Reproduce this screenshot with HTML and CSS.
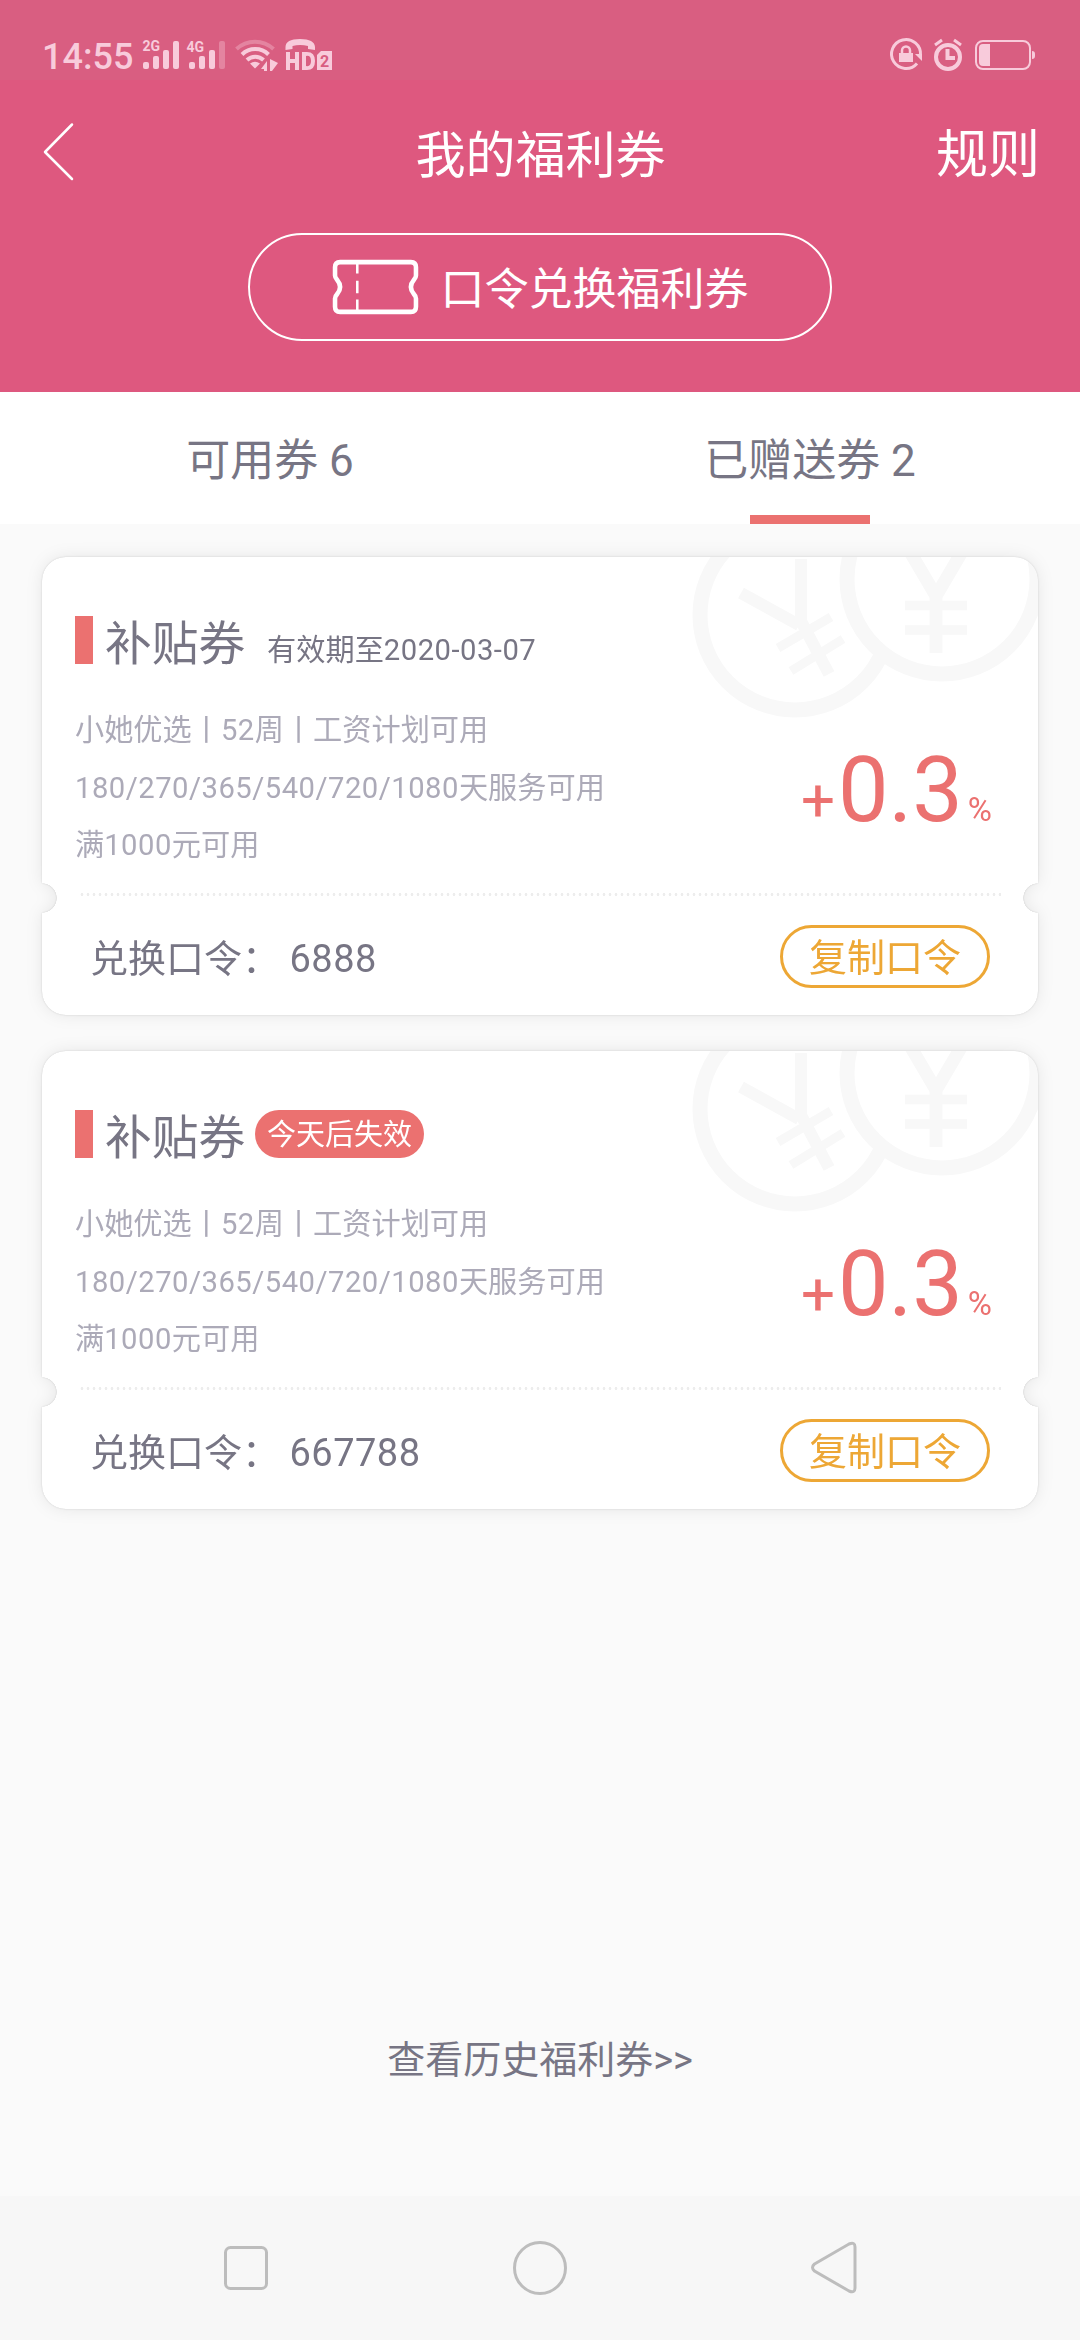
FILE: index.html
```html
<!DOCTYPE html>
<html lang="zh-CN">
<head>
<meta charset="utf-8">
<title>我的福利券</title>
<link rel="stylesheet" href="styles.css">
</head>
<body>
<div class="screen">
  <header class="header">
    <div class="status">
      <span class="time">14:55</span>
      <svg class="status-left" width="200" height="40" viewBox="140 36 200 40" fill="#f8cbdb">
        <text class="net" x="142.5" y="51">2G</text>
        <rect x="143" y="62" width="6" height="7" rx="2"/><rect x="153" y="56" width="6" height="13" rx="2"/><rect x="163" y="50" width="6" height="19" rx="2"/><rect x="173" y="41" width="6" height="28" rx="2"/>
        <text class="net" x="186.5" y="52">4G</text>
        <rect x="189" y="62" width="6" height="7" rx="2"/><rect x="199" y="56" width="6" height="13" rx="2"/><rect x="209" y="50" width="6" height="19" rx="2"/><rect x="219" y="41" width="6" height="28" rx="2" opacity=".35"/>
        <g fill="none" stroke="#f8cbdb" stroke-width="4">
          <path d="M236.500 49a27 27 0 0 1 37 0" opacity=".35"/>
          <path d="M242 54.500a19 19 0 0 1 26.500 0"/>
          <path d="M247 60a12 12 0 0 1 16.500 0"/>
        </g>
        <path d="M250 63.500q5-3.500 10 0l-5 5zM261 69l6-8v10h-3v-2zM270 59l8 4-6 8h-2z"/>
        <path d="M285.500 50v-3q0-8 14.500-8t15 8v3l-7-1v-3q-8-2-15.500 0v3z"/>
        <path d="M286 52h4v7h5v-7h4v18h-4v-7h-5v7h-4z"/>
        <path fill-rule="evenodd" d="M302 52h5q8 0 8 9t-8 9h-5zM306 56v10q5 1 5-5t-5-5z"/>
        <path d="M321 51h11v19h-15V55z"/>
        <text class="sim" x="320" y="66.500">2</text>
      </svg>
      <svg class="status-right" width="150" height="40" viewBox="888 36 150 40" fill="none" stroke="#f8cbdb" stroke-width="3">
        <path d="M917 63.500A14.500 14.500 0 1 1 920.500 55"/>
        <path d="M915 54h7v7z" fill="#f8cbdb" stroke="none"/>
        <rect x="899" y="53" width="14" height="9" fill="#f8cbdb" stroke="none"/>
        <path d="M902 54v-3.500a4 4 0 0 1 8 0V54" stroke-width="2.500"/>
        <circle cx="948" cy="57" r="12" stroke-width="4"/>
        <path d="M935 45l7-5M961 45l-7-5"/>
        <path d="M947.500 49v9h7.500" stroke-width="4"/>
        <rect x="976" y="41" width="54" height="28" rx="7" stroke-width="2"/>
        <path d="M990 44v22h-7q-4 0-4-4V48q0-4 4-4zM1032 51q3 0 3 3v2q0 3-3 3z" fill="#f8cbdb" stroke="none"/>
      </svg>
    </div>
    <nav class="bar">
      <svg class="back" width="36" height="64" viewBox="0 0 36 64"><path d="M31 4.500L4 32l27 27"/></svg>
      <h1 class="title">我的福利券</h1>
      <a class="rules">规则</a>
    </nav>
    <button class="redeem">
      <svg width="87" height="56" viewBox="0 0 86 54" preserveAspectRatio="none" fill="none" stroke="#fff" stroke-width="4.500">
        <path d="M8 3h70q5 0 5 5v8q0 2-2 4-6 7 0 14 2 2 2 4v8q0 5-5 5H8q-5 0-5-5v-8q0-2 2-4 6-7 0-14-2-2-2-4V8q0-5 5-5z"/>
        <path d="M25 4v10m0 7v12m0 6v11" stroke-width="2.500"/>
      </svg>
      <span>口令兑换福利券</span>
    </button>
  </header>

  <div class="tabs">
    <div class="tab">可用券 6</div>
    <div class="tab active">已赠送券 2</div>
  </div>

  <main class="list">
    <article class="card">
      <div class="card-body">
        <svg class="coins" width="360" height="170" viewBox="636 0 360 170"><use href="#coins"/></svg>
        <div class="card-head"><i class="mark"></i><h2>补贴券</h2><span class="date">有效期至<b>2020-03-07</b></span></div>
        <div class="info">
          <div class="rules-text"><p>小她优选丨<b>52</b>周丨工资计划可用</p><p><b>180/270/365/540/720/1080</b>天服务可用</p><p>满<b>1000</b>元可用</p></div>
          <div class="rate"><span class="plus">+</span><span class="num">0.3</span><span class="pct">%</span></div>
        </div>
        <div class="dots"></div>
        <div class="code"><span>兑换口令： <b>6888</b></span><button class="copy">复制口令</button></div>
      </div>
    </article>
    <article class="card">
      <div class="card-body">
        <svg class="coins" width="360" height="170" viewBox="636 0 360 170"><use href="#coins"/></svg>
        <div class="card-head"><i class="mark"></i><h2>补贴券</h2><span class="expire">今天后失效</span></div>
        <div class="info">
          <div class="rules-text"><p>小她优选丨<b>52</b>周丨工资计划可用</p><p><b>180/270/365/540/720/1080</b>天服务可用</p><p>满<b>1000</b>元可用</p></div>
          <div class="rate"><span class="plus">+</span><span class="num">0.3</span><span class="pct">%</span></div>
        </div>
        <div class="dots"></div>
        <div class="code"><span>兑换口令： <b>667788</b></span><button class="copy">复制口令</button></div>
      </div>
    </article>
  </main>

  <a class="history">查看历史福利券&gt;&gt;</a>

  <footer class="sysnav">
    <svg width="56" height="60" viewBox="0 0 56 60"><rect x="7.500" y="9.500" width="41" height="41" rx="5"/></svg>
    <svg width="56" height="60" viewBox="0 0 56 60"><circle cx="28" cy="30" r="25.500"/></svg>
    <svg width="56" height="60" viewBox="0 0 56 60"><path d="M8.500 26L43 6Q49 3.500 49 9v41q0 5.500-6 3L8.500 33Q4.500 29.500 8.500 26z"/></svg>
  </footer>
</div>
<svg class="defs" width="0" height="0">
  <defs>
    <g id="coins" fill="none" stroke="#f8f8f8">
      <circle cx="753" cy="58" r="95" stroke-width="15"/>
      <path d="M699 36l58 32M759 2v62l28 53" stroke-width="12"/>
      <path d="M736 91l53-31M749 114l52-32" stroke-width="9"/>
      <circle cx="900" cy="22" r="95" fill="#fff" stroke-width="15"/>
      <path d="M864-12l30 51 30-51M894 33v63" stroke-width="13"/>
      <path d="M863 48.500h62M863 73h62" stroke-width="9.500"/>
    </g>
  </defs>
</svg>
</body>
</html>
```
FILE: styles.css
```css
* { box-sizing: border-box; margin: 0; padding: 0; }

body {
  font-family: Roboto, "Noto Sans CJK SC", sans-serif;
  background: #fafafa;
  color: #777584;
}

button { font: inherit; background: none; }

/* runs of digits are set slightly wider than the surrounding text */
b { font-weight: 400; letter-spacing: .5px; }

.screen {
  width: 1080px;
  height: 2340px;
  display: flex;
  flex-direction: column;
}

.header {
  height: 392px;
  background: #de587f;
  color: #fff;
  display: flex;
  flex-direction: column;
  align-items: center;
}

.status {
  width: 100%;
  height: 80px;
  padding: 36px 42px 0 42px;
  background: #d95e81;
  display: flex;
  align-items: flex-start;
}

.time {
  width: 98px;
  padding-top: 1px;
  font-size: 36px;
  font-weight: 500;
  line-height: 40px;
  color: #f8cbdb;
}

.net { font: 700 14px Roboto, sans-serif; }
.sim { font: 700 16px Roboto, sans-serif; fill: #d95e81; }
.status-right { margin-left: auto; }

.bar {
  width: 100%;
  height: 153px;
  padding: 0 40px 10px 41px;
  display: grid;
  grid-template-columns: 1fr auto 1fr;
  align-items: center;
}

.back { fill: none; stroke: #fff; stroke-width: 2.5; stroke-linecap: round; stroke-linejoin: round; }
.title { padding-top: 8px; font-size: 50px; font-weight: 400; line-height: 60px; }
.rules { padding-top: 8px; justify-self: end; font-size: 52px; line-height: 60px; }

.redeem {
  width: 584px;
  height: 108px;
  border: 2px solid #fff;
  border-radius: 54px;
  color: #fff;
  font-size: 44px;
  line-height: 60px;
  display: flex;
  align-items: center;
  justify-content: center;
  gap: 22px;
}

.redeem span { padding-top: 5px; }

.tabs {
  height: 132px;
  background: #fff;
  display: grid;
  grid-template-columns: 1fr 1fr;
}

.tab {
  height: 132px;
  display: flex;
  flex-direction: column;
  align-items: center;
  font-size: 44px;
  line-height: 138px;
}

.active::after {
  content: "";
  width: 120px;
  height: 9px;
  flex: none;
  margin-top: -15px;
  background: #eb7170;
}

.list {
  padding: 33px 42px 0;
  display: flex;
  flex-direction: column;
  gap: 36px;
}

.card { filter: drop-shadow(0 0 1px rgba(0, 0, 0, .13)) drop-shadow(0 0 8px rgba(0, 0, 0, .08)); }

.card-body {
  position: relative;
  height: 458px;
  padding: 59px 37px 0 33px;
  background: #fff;
  border-radius: 24px;
  display: flex;
  flex-direction: column;
  -webkit-mask: radial-gradient(circle 15px at 0 341px, transparent 14.5px, #000 15px) left / 50% 100% no-repeat,
    radial-gradient(circle 15px at 100% 341px, transparent 14.5px, #000 15px) right / 50% 100% no-repeat;
}

.coins { position: absolute; top: 0; right: 0; border-top-right-radius: 24px; }
.defs { position: absolute; }

.card-head {
  position: relative;
  height: 48px;
  display: flex;
  align-items: center;
}

.mark { width: 18px; height: 48px; background: #eb7170; }

.card-head h2 {
  margin-left: 12px;
  font-size: 46.7px;
  font-weight: 400;
  line-height: 56px;
  padding-top: 8px;
}

.date {
  margin-left: 22px;
  padding-top: 20px;
  font-size: 29.2px;
  line-height: 40px;
}

.expire {
  width: 169px;
  height: 48px;
  margin-left: 10px;
  border-radius: 24px;
  background: #eb7170;
  color: #fff;
  font-size: 29px;
  line-height: 51px;
  text-align: center;
}

.info {
  position: relative;
  height: 229px;
  display: flex;
  justify-content: space-between;
}

.rules-text {
  padding-top: 37px;
  color: #acaab8;
  font-size: 29.2px;
  line-height: 58px;
}

.rules-text p:last-child { margin-top: -1px; }

.rate {
  display: flex;
  align-items: baseline;
  color: #eb7170;
  line-height: 120px;
  padding-top: 67px;
  padding-right: 9px;
}

.plus { font-size: 60px; }
.num { font-size: 90px; margin-left: 3px; }
.pct { font-size: 33px; margin-left: 5px; }

.dots {
  height: 3px;
  margin-left: 4px;
  background: radial-gradient(circle 1.5px, #ededed 1.2px, transparent 1.6px) 0 0 / 6px 3px repeat-x;
}

.code {
  height: 92px;
  padding: 29px 11px 0 15px;
  display: flex;
  justify-content: space-between;
  align-items: flex-start;
  font-size: 38px;
  line-height: 63px;
}

.code span { padding-top: 3px; white-space: pre; }

.copy {
  width: 210px;
  height: 63px;
  border: 3px solid #eda735;
  border-radius: 32px;
  color: #eda735;
  line-height: 60px;
}

.history {
  margin-top: 520px;
  text-align: center;
  font-size: 38px;
  line-height: 62px;
}

.sysnav {
  height: 144px;
  margin-top: auto;
  padding: 42px 218px 0;
  background: #f7f7f7;
  display: flex;
  justify-content: space-between;
  fill: none;
  stroke: #bdbdbd;
  stroke-width: 3;
}
```
